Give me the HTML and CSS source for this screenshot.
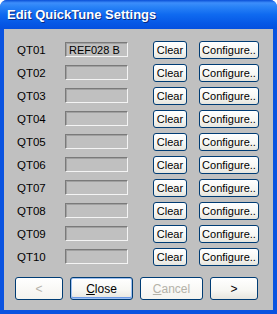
FILE: index.html
```html
<!DOCTYPE html>
<html lang="en">
<head>
    <meta charset="UTF-8">
    <title>Edit QuickTune Settings</title>
    <link rel="stylesheet" href="styles.css">
</head>
<body>

    <div class="window">
        <div class="titlebar">Edit QuickTune Settings</div>

        <div class="content">
            <div class="rows">
                <div class="row"><span class="label">QT01</span><div class="field">REF028 B</div><button class="btn clear">Clear</button><button class="btn conf">Configure..</button></div>
                <div class="row"><span class="label">QT02</span><div class="field"></div><button class="btn clear">Clear</button><button class="btn conf">Configure..</button></div>
                <div class="row"><span class="label">QT03</span><div class="field"></div><button class="btn clear">Clear</button><button class="btn conf">Configure..</button></div>
                <div class="row"><span class="label">QT04</span><div class="field"></div><button class="btn clear">Clear</button><button class="btn conf">Configure..</button></div>
                <div class="row"><span class="label">QT05</span><div class="field"></div><button class="btn clear">Clear</button><button class="btn conf">Configure..</button></div>
                <div class="row"><span class="label">QT06</span><div class="field"></div><button class="btn clear">Clear</button><button class="btn conf">Configure..</button></div>
                <div class="row"><span class="label">QT07</span><div class="field"></div><button class="btn clear">Clear</button><button class="btn conf">Configure..</button></div>
                <div class="row"><span class="label">QT08</span><div class="field"></div><button class="btn clear">Clear</button><button class="btn conf">Configure..</button></div>
                <div class="row"><span class="label">QT09</span><div class="field"></div><button class="btn clear">Clear</button><button class="btn conf">Configure..</button></div>
                <div class="row"><span class="label">QT10</span><div class="field"></div><button class="btn clear">Clear</button><button class="btn conf">Configure..</button></div>
            </div>

            <div class="actions">
                <button class="btn nav disabled">&lt;</button>
                <button class="btn wide default"><u>C</u>lose</button>
                <button class="btn wide disabled"><u>C</u>ancel</button>
                <button class="btn nav">&gt;</button>
            </div>
        </div>
    </div>

</body>
</html>
```

FILE: styles.css
```css
body {
    margin: 0;
    background: #ffffff;
    font-family: "Liberation Sans", Arial, sans-serif;
    font-size: 11px;
}
.window {
    width: 277px;
    height: 314px;
    display: flex;
    flex-direction: column;
    background: #0a53e0;
    border-radius: 7px 7px 0 0;
    overflow: hidden;
}
.titlebar {
    height: 29px;
    flex: none;
    padding-left: 7px;
    line-height: 30px;
    color: #ffffff;
    font-weight: bold;
    font-size: 13px;
    background: linear-gradient(to bottom, #0a4fd6 0%, #3d8efb 10%, #2b84f7 22%, #0f6af0 50%, #0658e6 80%, #0550df 100%);
    text-shadow: 1px 1px 0 #0a2a80;
}
.content {
    flex: 1;
    margin: 0 4px 4px 4px;
    background: #c0c0c0;
    padding: 9px 13px 10px 13px;
    display: flex;
    flex-direction: column;
}
.rows {
    display: grid;
    grid-template-rows: repeat(10, 23px);
}
.row {
    display: flex;
    align-items: center;
}
.label {
    width: 48px;
    font-size: 11.5px;
    color: #000000;
}
.field {
    width: 58px;
    height: 13px;
    border: 1px solid;
    border-color: #7a7a7a #f4f4f4 #f4f4f4 #7a7a7a;
    box-shadow: inset 1px 1px 0 #a0a0a0;
    padding: 0 0 0 3px;
    line-height: 14px;
    color: #000000;
}
.btn {
    font-family: "Liberation Sans", Arial, sans-serif;
    font-size: 11px;
    color: #000000;
    border: 1px solid #003c74;
    border-radius: 3px;
    background: linear-gradient(to bottom, #ffffff 0%, #f6f6f2 60%, #e6e5de 100%);
    padding: 0;
    height: 18px;
}
.clear {
    margin-left: 25px;
    width: 34px;
}
.conf {
    margin-left: 12px;
    width: 60px;
}
.actions {
    margin-top: 9px;
    margin-left: -2px;
    display: flex;
    gap: 7px;
}
.actions .btn {
    height: 23px;
    font-size: 12px;
}
.nav {
    width: 48px;
}
.wide {
    width: 63px;
}
.default {
    box-shadow: inset 0 0 0 1px #9fc1f2, inset 0 -1px 0 1px #6d9ae6;
}
.disabled {
    color: #b4b2a8;
    background: linear-gradient(to bottom, #ffffff, #f4f3ee);
}
```
